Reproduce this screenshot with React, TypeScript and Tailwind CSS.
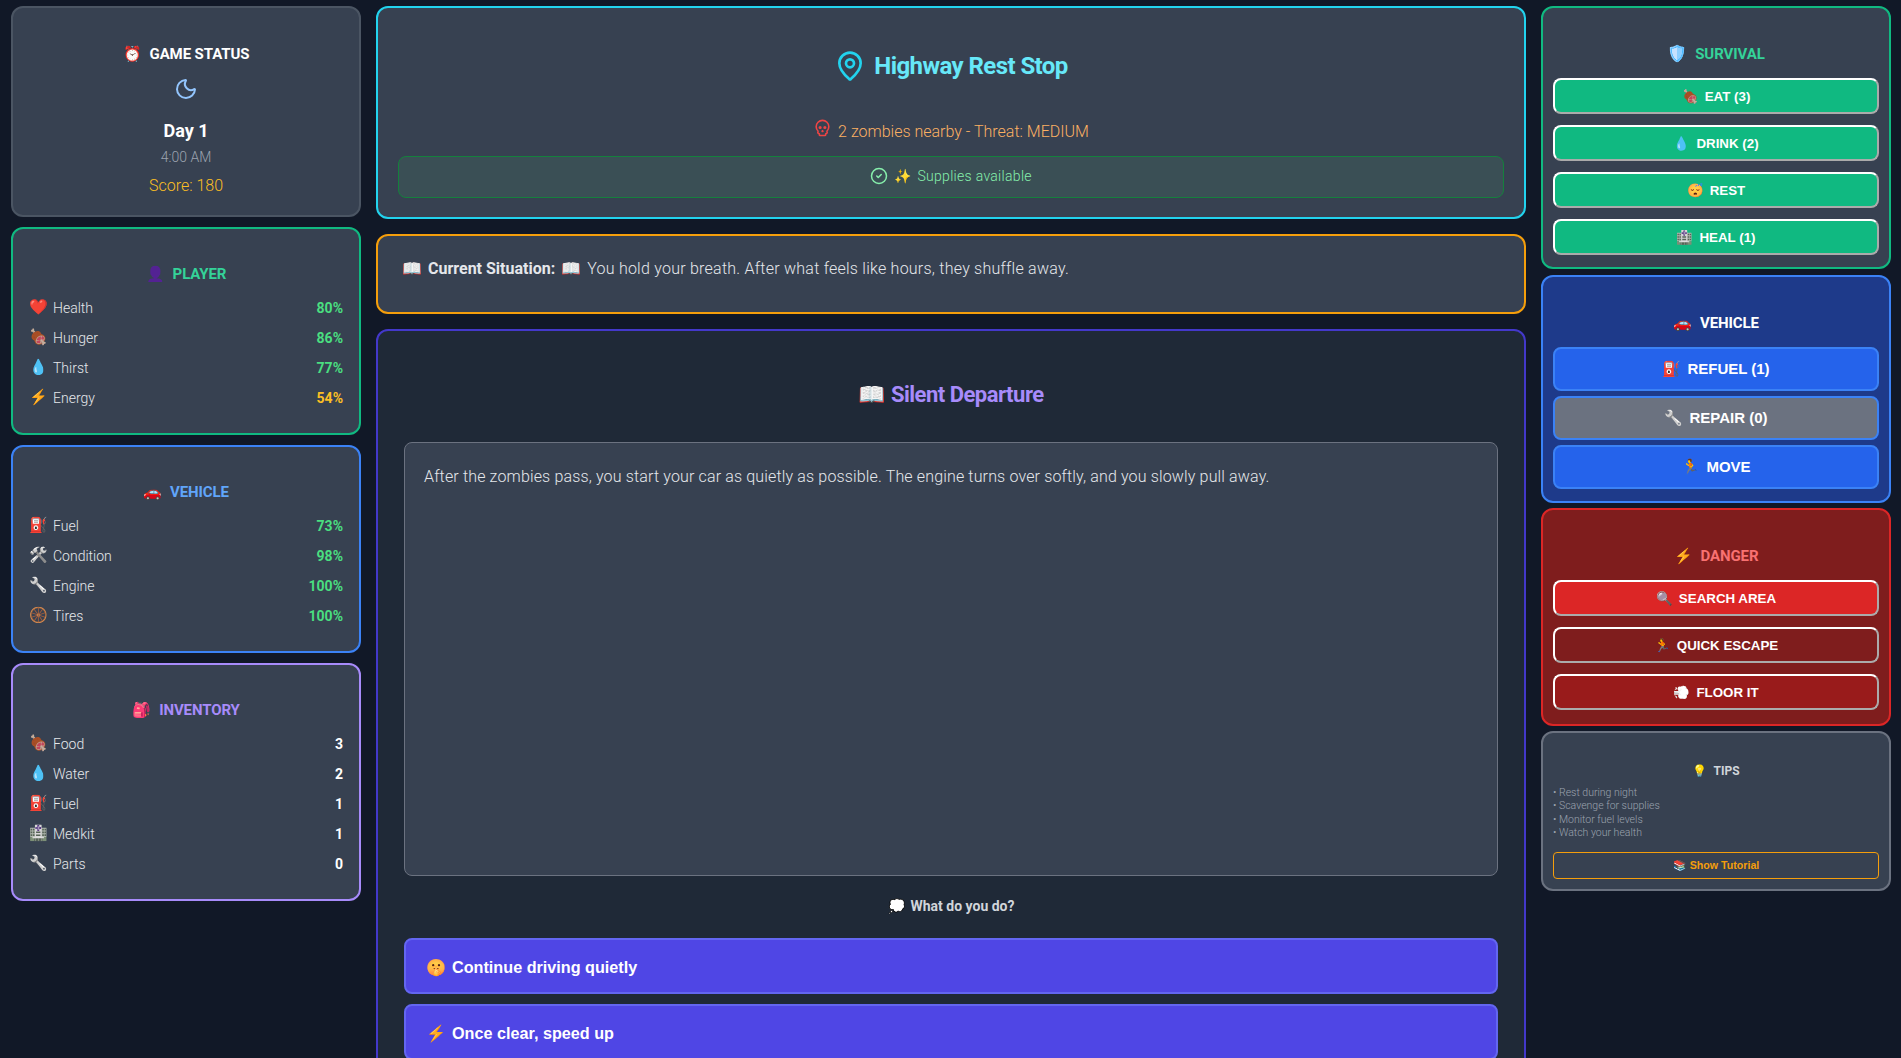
import type { ReactNode } from "react";
import { Moon, MapPin, Skull, CircleCheck } from "lucide-react";

const font = "font-['Roboto',sans-serif]";

const bolt = "hue-rotate-[-28deg] saturate-150";
const silver = "grayscale brightness-125";
const meat = "hue-rotate-[-12deg] brightness-75";
const medkit = "saturate-50 brightness-90 hue-rotate-[280deg]";
const face = "hue-rotate-[-20deg]";
const runner = "saturate-150";

function E({ c, cls = "" }: { c: string; cls?: string }) {
  return <span className={`inline-block ${cls}`}>{c}</span>;
}

function Heading({ emoji, text, color, cls }: { emoji: ReactNode; text: string; color: string; cls: string }) {
  return (
    <div className={`flex items-center justify-center gap-2 text-[15px] leading-6 font-bold tracking-[-0.1px] uppercase ${color} ${cls}`}>
      {emoji}
      <span>{text}</span>
    </div>
  );
}

function Row({ emoji, label, value, color }: { emoji: ReactNode; label: string; value: string; color: string }) {
  return (
    <div className="flex h-[30px] items-center justify-between text-sm">
      <div className="flex items-center gap-2 font-light text-[#e5e7eb]">
        <span className="w-4 text-center text-[15px]">{emoji}</span>
        <span>{label}</span>
      </div>
      <span className={`font-bold ${color}`}>{value}</span>
    </div>
  );
}

function Btn({ children, cls }: { children: ReactNode; cls: string }) {
  return (
    <button className={`flex w-full items-center justify-center gap-1.5 rounded-lg pt-[2px] font-['Liberation_Sans',Arial,sans-serif] font-bold text-white ${cls}`}>
      {children}
    </button>
  );
}

const g = "text-[#4ade80]";
const card = "rounded-xl border-2 bg-[#374151]";

export default function App() {
  return (
    <div className={`h-screen overflow-hidden bg-[#111827] ${font}`}>
      <div className="grid grid-cols-[350px_1150px_350px] gap-[15px] pt-[6px] pl-[11px]">
        <div className="flex flex-col gap-[10.5px]">
          <div className={`flex h-[210.5px] flex-col items-center border-[#4b5563] px-4 ${card}`}>
            <Heading emoji={<E c="⏰" />} text="Game Status" color="text-white" cls="mt-[34px]" />
            <Moon className="mt-[11px] h-6 w-6 text-[#93c5fd]" />
            <div className="mt-[16px] text-lg leading-7 font-bold text-white">Day 1</div>
            <div className="mt-[2px] text-sm leading-5 font-light text-[#9ca3af]">4:00 AM</div>
            <div className="mt-[7px] text-base leading-6 font-light text-[#fbbf24]">Score: 180</div>
          </div>
          <div className={`border-[#10b981] px-4 pt-[33px] pb-[19.5px] ${card}`}>
            <Heading emoji={<E c="👤" cls="hue-rotate-[55deg] brightness-50 saturate-150" />} text="Player" color="text-[#34d399]" cls="mb-[7px]" />
            <Row emoji={<E c="❤️" />} label="Health" value="80%" color={g} />
            <Row emoji={<E c="🍖" cls={meat} />} label="Hunger" value="86%" color={g} />
            <Row emoji={<E c="💧" />} label="Thirst" value="77%" color={g} />
            <Row emoji={<E c="⚡" cls={bolt} />} label="Energy" value="54%" color="text-[#fbbf24]" />
          </div>
          <div className={`border-[#3b82f6] px-4 pt-[33px] pb-[19.5px] ${card}`}>
            <Heading emoji={<E c="🚗" />} text="Vehicle" color="text-[#60a5fa]" cls="mb-[7px]" />
            <Row emoji={<E c="⛽" />} label="Fuel" value="73%" color={g} />
            <Row emoji={<E c="🛠️" cls={silver} />} label="Condition" value="98%" color={g} />
            <Row emoji={<E c="🔧" cls={silver} />} label="Engine" value="100%" color={g} />
            <Row emoji={<E c="🛞" />} label="Tires" value="100%" color={g} />
          </div>
          <div className={`border-[#a78bfa] px-4 pt-[33px] pb-[19.5px] ${card}`}>
            <Heading emoji={<E c="🎒" cls="hue-rotate-[-25deg]" />} text="Inventory" color="text-[#a78bfa]" cls="mb-[7px]" />
            <Row emoji={<E c="🍖" cls={meat} />} label="Food" value="3" color="text-white" />
            <Row emoji={<E c="💧" />} label="Water" value="2" color="text-white" />
            <Row emoji={<E c="⛽" />} label="Fuel" value="1" color="text-white" />
            <Row emoji={<E c="🏥" cls={medkit} />} label="Medkit" value="1" color="text-white" />
            <Row emoji={<E c="🔧" cls={silver} />} label="Parts" value="0" color="text-white" />
          </div>
        </div>

        <div className="flex flex-col gap-[15px]">
          <div className={`flex h-[213px] flex-col items-center border-[#22d3ee] px-[20px] ${card}`}>
            <div className="mt-[42px] flex items-center gap-2">
              <MapPin className="h-8 w-8 text-[#22d3ee]" />
              <span className="text-2xl font-bold tracking-[-0.57px] text-[#67e8f9]">Highway Rest Stop</span>
            </div>
            <div className="mt-[36px] flex items-center gap-1.5 text-base leading-6 font-light text-[#fbb063]">
              <Skull className="mb-2 h-[19px] w-[19px] text-[#ef4444]" />
              <span>2 zombies nearby - Threat: MEDIUM</span>
            </div>
            <div className="mt-[11px] flex h-[42px] w-full items-center justify-center gap-1.5 rounded-lg border border-[#15803d] bg-[#3a4f55] pb-[2px] text-sm font-light tracking-[0.3px] text-[#86efac]">
              <CircleCheck className="h-[18px] w-[18px]" />
              <span>✨</span>
              <span>Supplies available</span>
            </div>
          </div>
          <div className={`flex h-[80px] items-start gap-1.5 border-[#f59e0b] px-[24px] pt-[21px] text-base leading-6 text-[#e5e7eb] ${card}`}>
            <span>📖</span>
            <span className="font-bold">Current Situation:</span>
            <span>📖</span>
            <span className="font-light tracking-[0.24px]">You hold your breath. After what feels like hours, they shuffle away.</span>
          </div>
          <div className="rounded-xl border-2 border-[#4338ca] bg-[#1f2937] px-[26px] pt-[50px] pb-[40px]">
            <div className="flex items-center justify-center gap-1.5 text-[22px] leading-7 font-bold tracking-[-0.5px] text-[#a78bfa]">
              <span>📖</span>
              <span>Silent Departure</span>
            </div>
            <div className="mt-[33px] h-[434px] rounded-lg border border-[#6b7280] bg-[#374151] px-[19px] pt-[22px] text-base leading-6 font-light tracking-[0.15px] text-[#e5e7eb]">
              After the zombies pass, you start your car as quietly as possible. The engine turns over softly, and you slowly pull away.
            </div>
            <div className="mt-[20px] flex items-center justify-center gap-1.5 text-sm leading-5 font-bold text-[#d1d5db]">
              <span>💭</span>
              <span>What do you do?</span>
            </div>
            <div className="mt-[22px] flex flex-col gap-[10px]">
              <button className="flex h-[56px] items-center gap-1.5 rounded-lg border-2 border-[#6366f1] bg-[#4f46e5] px-[20px] pt-[3px] font-['Liberation_Sans',Arial,sans-serif] text-[16.2px] font-bold text-white">
                <E c="🤫" cls={face} />
                <span>Continue driving quietly</span>
              </button>
              <button className="flex h-[56px] items-center gap-1.5 rounded-lg border-2 border-[#6366f1] bg-[#4f46e5] px-[20px] pt-[3px] font-['Liberation_Sans',Arial,sans-serif] text-[16.2px] font-bold text-white">
                <E c="⚡" cls={bolt} />
                <span>Once clear, speed up</span>
              </button>
            </div>
          </div>
        </div>

        <div className="flex flex-col gap-[5.5px]">
          <div className="rounded-xl border-2 border-[#10b981] bg-[#374151] px-[10px] pt-[34px] pb-[12px]">
            <Heading emoji={<E c="🛡️" cls="text-base [filter:sepia(1)_saturate(6)_hue-rotate(175deg)]" />} text="Survival" color="text-[#34d399]" cls="mb-[12px]" />
            <div className="flex flex-col gap-[11px]">
              <Btn cls="h-[36px] border-2 [border-style:outset] border-white bg-[#10b981] text-[13.33px]"><E c="🍖" cls={meat} /> EAT (3)</Btn>
              <Btn cls="h-[36px] border-2 [border-style:outset] border-white bg-[#10b981] text-[13.33px]"><E c="💧" /> DRINK (2)</Btn>
              <Btn cls="h-[36px] border-2 [border-style:outset] border-white bg-[#10b981] text-[13.33px]"><E c="😴" cls={face} /> REST</Btn>
              <Btn cls="h-[36px] border-2 [border-style:outset] border-white bg-[#10b981] text-[13.33px]"><E c="🏥" cls={medkit} /> HEAL (1)</Btn>
            </div>
          </div>
          <div className="rounded-xl border-2 border-[#3b82f6] bg-[#1e3a8a] px-[10px] pt-[34px] pb-[12px]">
            <Heading emoji={<E c="🚗" />} text="Vehicle" color="text-white" cls="mb-[12px]" />
            <div className="flex flex-col gap-[5px]">
              <Btn cls="h-[44px] border-2 border-[#3b82f6] bg-[#2563eb] text-[15px]"><E c="⛽" /> REFUEL (1)</Btn>
              <Btn cls="h-[44px] border-2 border-[#3b82f6] bg-[#6b7280] text-[15px]"><E c="🔧" cls={silver} /> REPAIR (0)</Btn>
              <Btn cls="h-[44px] border-2 border-[#3b82f6] bg-[#2563eb] text-[15px]"><E c="🏃" cls={runner} /> MOVE</Btn>
            </div>
          </div>
          <div className="rounded-xl border-2 border-[#dc2626] bg-[#7f1d1d] px-[10px] pt-[34px] pb-[13.5px]">
            <Heading emoji={<E c="⚡" cls={bolt} />} text="Danger" color="text-[#f87171]" cls="mb-[12px]" />
            <div className="flex flex-col gap-[11px]">
              <Btn cls="h-[36px] border-2 [border-style:outset] border-white bg-[#dc2626] text-[13.33px]"><E c="🔍" /> SEARCH AREA</Btn>
              <Btn cls="h-[36px] border-2 [border-style:outset] border-white bg-[#7f1d1d] text-[13.33px]"><E c="🏃" cls={runner} /> QUICK ESCAPE</Btn>
              <Btn cls="h-[36px] border-2 [border-style:outset] border-white bg-[#991b1b] text-[13.33px]"><E c="💨" cls={silver} /> FLOOR IT</Btn>
            </div>
          </div>
          <div className="rounded-xl border-2 border-[#6b7280] bg-[#374151] px-[10px] pt-[30px] pb-[10px]">
            <div className="flex items-center justify-center gap-1.5 text-xs leading-4 font-bold text-[#d1d5db]">
              <span>💡</span>
              <span>TIPS</span>
            </div>
            <div className="mt-[7px] text-[10.5px] leading-[13.3px] font-light text-[#9ca3af]">
              <div>• Rest during night</div>
              <div>• Scavenge for supplies</div>
              <div>• Monitor fuel levels</div>
              <div>• Watch your health</div>
            </div>
            <button className="mt-[12.5px] flex h-[27px] w-full items-center justify-center gap-1 rounded border border-[#f59e0b] font-['Liberation_Sans',Arial,sans-serif] text-[10.67px] font-bold text-[#f59e0b]">
              <span>📚</span>
              <span>Show Tutorial</span>
            </button>
          </div>
        </div>
      </div>
    </div>
  );
}
